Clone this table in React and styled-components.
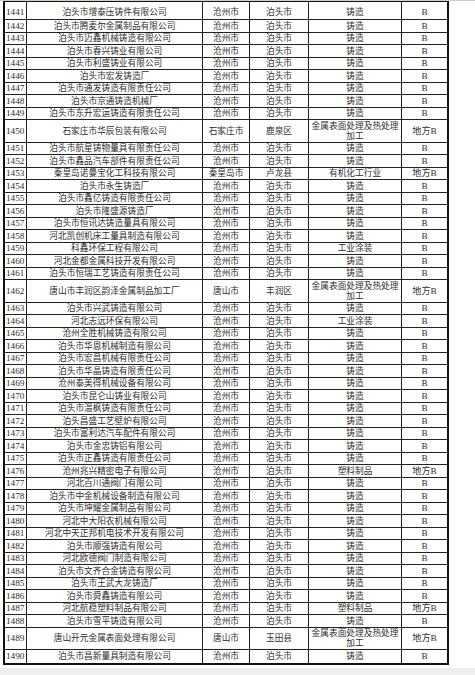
import React from "react";
import styled, { createGlobalStyle } from "styled-components";

const Global = createGlobalStyle`
  html, body { margin: 0; padding: 0; background: #efefef; }
  body { font-family: "Liberation Serif", "Noto Sans CJK SC", serif; color: #1a1a1a; }
`;

const Page = styled.div`
  width: 475px;
  background: #ffffff;
  border-top: 1px solid #cfcfcf;
  padding: 0 0 3px 3px;
  box-sizing: border-box;
`;

const Table = styled.div`
  width: 446px;
  border: 2px solid #111;
  border-top: 1px solid #111;
  box-sizing: border-box;
`;

const Row = styled.div`
  display: grid;
  grid-template-columns: 22px 176px 47px 59px 93px 45px;
  height: ${(p) => p.$h}px;
  border-bottom: ${(p) => (p.$last ? "0" : "1px solid #222")};
  box-sizing: border-box;
`;

const Cell = styled.div`
  display: flex;
  align-items: ${(p) => (p.$low ? "flex-end" : "center")};
  justify-content: ${(p) => (p.$left ? "flex-start" : "center")};
  padding: ${(p) => (p.$left ? "0 0 0 1px" : "0 1px")};
  padding-bottom: ${(p) => (p.$low ? "2px" : "0")};
  border-right: ${(p) => (p.$end ? "0" : "1px solid #222")};
  box-sizing: border-box;
  overflow: visible;
  text-align: center;
  white-space: ${(p) => (p.$wrap ? "normal" : "nowrap")};
  line-height: 10px;
  font-size: ${(p) => (p.$num ? "9.2px" : "8.7px")};
  font-family: "Liberation Serif", "Noto Sans CJK SC", serif;
  color: #2e2e2e;
`;

const C = "沧州市";
const D = "泊头市";
const Z = "铸造";
const M = "金属表面处理及热处理加工";

const rows = [
  [1441, "泊头市增泰压铸件有限公司", C, D, Z, "B"],
  [1442, "泊头市腾麦尔金属制品有限公司", C, D, Z, "B"],
  [1443, "泊头市迈鑫机械铸造有限公司", C, D, Z, "B"],
  [1444, "泊头市春兴铸业有限公司", C, D, Z, "B"],
  [1445, "泊头市利盛铸业有限公司", C, D, Z, "B"],
  [1446, "泊头市宏发铸造厂", C, D, Z, "B"],
  [1447, "泊头市通发铸造有限责任公司", C, D, Z, "B"],
  [1448, "泊头市京通铸造机械厂", C, D, Z, "B"],
  [1449, "泊头市东升宏运铸造有限责任公司", C, D, Z, "B"],
  [1450, "石家庄市华辰包装有限公司", "石家庄市", "鹿泉区", M, "地方B", true],
  [1451, "泊头市航星铸物量具有限责任公司", C, D, Z, "B"],
  [1452, "泊头市鑫品汽车部件有限责任公司", C, D, Z, "B"],
  [1453, "秦皇岛诺曼宝化工科技有限公司", "秦皇岛市", "卢龙县", "有机化工行业", "地方B"],
  [1454, "泊头市永生铸造厂", C, D, Z, "B"],
  [1455, "泊头市鑫亿铸造有限责任公司", C, D, Z, "B"],
  [1456, "泊头市隆盛源铸造厂", C, D, Z, "B"],
  [1457, "泊头市恒讯达铸造量具有限公司", C, D, Z, "B"],
  [1458, "河北凯创机床工量具制造有限公司", C, D, Z, "B"],
  [1459, "科鑫环保工程有限公司", C, D, "工业涂装", "B"],
  [1460, "河北金都金属科技开发有限公司", C, D, Z, "B"],
  [1461, "泊头市恒瑞工艺铸造有限责任公司", C, D, Z, "B"],
  [1462, "唐山市丰润区韵泽金属制品加工厂", "唐山市", "丰润区", M, "地方B", true],
  [1463, "泊头市兴武铸造有限公司", C, D, Z, "B"],
  [1464, "河北志远环保有限公司", C, D, "工业涂装", "B"],
  [1465, "沧州全胜机械铸造有限公司", C, D, Z, "B"],
  [1466, "泊头市华恩机械制造有限公司", C, D, Z, "B"],
  [1467, "泊头市宏昌机械有限责任公司", C, D, Z, "B"],
  [1468, "泊头市华晶铸造有限责任公司", C, D, Z, "B"],
  [1469, "沧州泰美得机械设备有限公司", C, D, Z, "B"],
  [1470, "泊头市昆仑山铸业有限公司", C, D, Z, "B"],
  [1471, "泊头市温枫铸造有限责任公司", C, D, Z, "B"],
  [1472, "泊头昌盛工艺壁炉有限公司", C, D, Z, "B"],
  [1473, "泊头市富利达汽车配件有限公司", C, D, Z, "B"],
  [1474, "泊头市金忠铸铝有限公司", C, D, Z, "B"],
  [1475, "泊头市正鑫铸造有限责任公司", C, D, Z, "B"],
  [1476, "沧州兆兴精密电子有限公司", C, D, "塑料制品", "地方B"],
  [1477, "河北百川通阀门有限公司", C, D, Z, "B"],
  [1478, "泊头市中金机械设备制造有限公司", C, D, Z, "B"],
  [1479, "泊头市坤耀金属制品有限公司", C, D, Z, "B"],
  [1480, "河北中大阳农机械有限公司", C, D, Z, "B"],
  [1481, "河北中天正邦机电技术开发有限公司", C, D, Z, "B"],
  [1482, "泊头市顺强铸造有限公司", C, D, Z, "B"],
  [1483, "河北欧德阀门制造有限公司", C, D, Z, "B"],
  [1484, "泊头市文齐合金铸造有限公司", C, D, Z, "B"],
  [1485, "泊头市王武大龙铸造厂", C, D, Z, "B"],
  [1486, "泊头市舜鑫铸造有限公司", C, D, Z, "B"],
  [1487, "河北航稳塑料制品有限公司", C, D, "塑料制品", "地方B"],
  [1488, "泊头市雪平铸造有限公司", C, D, Z, "B"],
  [1489, "唐山开元金属表面处理有限公司", "唐山市", "玉田县", M, "地方B", true],
  [1490, "泊头市昌新量具制造有限公司", C, D, Z, "B"],
];

export default function App() {
  return (
    <>
      <Global />
      <Page>
        <Table>
          {rows.map((r, i) => {
            const first = i === 0;
            const tall = r[6];
            const h = first ? 18 : tall ? 22.5 : 12.5;
            const last = i === rows.length - 1;
            return (
              <Row key={r[0]} $h={h} $last={last}>
                <Cell $left $num $low={first}>{r[0]}</Cell>
                <Cell $low={first}>{r[1]}</Cell>
                <Cell $low={first}>{r[2]}</Cell>
                <Cell $low={first}>{r[3]}</Cell>
                <Cell $wrap={tall} $low={first}>{r[4]}</Cell>
                <Cell $num $end $low={first}>{r[5]}</Cell>
              </Row>
            );
          })}
        </Table>
      </Page>
    </>
  );
}
